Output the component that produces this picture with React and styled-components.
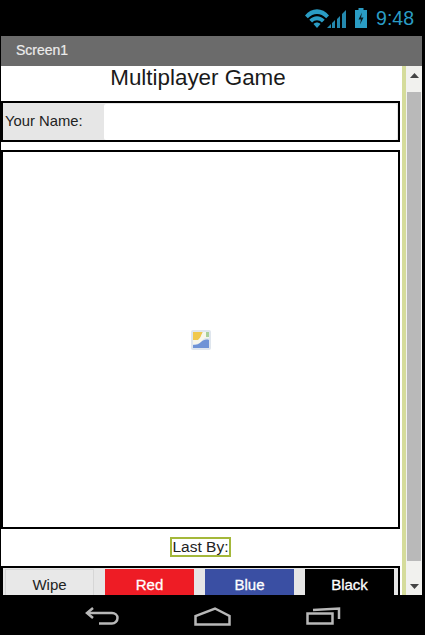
import React from 'react'
import styled, { createGlobalStyle } from 'styled-components'

const GlobalStyle = createGlobalStyle`
  html, body {
    margin: 0;
    padding: 0;
    background: #000;
    font-family: "Liberation Sans", Arial, sans-serif;
  }
`

const App = () => (
  <Phone>
    <GlobalStyle />
    <StatusBar>
      <WifiIcon />
      <SignalIcon />
      <BatteryIcon />
      <Clock>9:48</Clock>
    </StatusBar>
    <TitleBar>Screen1</TitleBar>
    <Body>
      <Content>
        <Title>Multiplayer Game</Title>
        <NameRow>
          <NameLabel>Your Name:</NameLabel>
          <NameInput />
        </NameRow>
        <Canvas>
          <BrokenImage />
        </Canvas>
        <LastRow>
          <LastBy>Last By:</LastBy>
        </LastRow>
        <ButtonRow>
          <ColorButton $bg="#e8e8e8" $fg="#222" $edge="#d6d6d6">Wipe</ColorButton>
          <ColorButton $bg="#ee1c25" $fg="#fff" $bold>Red</ColorButton>
          <ColorButton $bg="#3a4fa3" $fg="#fff" $bold>Blue</ColorButton>
          <ColorButton $bg="#000" $fg="#fff" $bold>Black</ColorButton>
        </ButtonRow>
      </Content>
      <Scrollbar>
        <Arrow viewBox="0 0 9 5"><path d="M4.5 0 9 5H0z" /></Arrow>
        <Thumb />
        <BottomArrow viewBox="0 0 9 5"><path d="M0 0h9L4.5 5z" /></BottomArrow>
      </Scrollbar>
    </Body>
    <NavBar>
      <BackIcon />
      <HomeIcon />
      <RecentIcon />
    </NavBar>
  </Phone>
)

export default App

const WifiIcon = () => (
  <StatusSvg width="24" height="19" viewBox="0 0 24 19" fill="#2a9cc4">
    <path d="M0 6.500C6.500-1.800 17.500-1.800 24 6.500l-2.800 2.800C15.800 3.600 8.200 3.600 2.800 9.300z" />
    <path d="M4.300 10.800c4.400-4.800 11-4.800 15.400 0l-2.800 2.700c-2.900-3-6.900-3-9.800 0z" />
    <path d="M8.500 15c2-2 5-2 7 0L12 19z" />
  </StatusSvg>
)

const SignalIcon = () => (
  <SignalSvg width="19" height="19" viewBox="0 0 19 19" fill="#2488ad">
    <path d="M0 19 4 15v4zM5 19v-5l3-3v8zM10 19V10l3-3v12zM15 19V5l4-4v18z" />
  </SignalSvg>
)

const BatteryIcon = () => (
  <BatterySvg width="12" height="20" viewBox="0 0 12 20">
    <path d="M3.500 0h5v2H12v18H0V2h3.500z" fill="#2a9cc4" />
    <path d="M7 4.500 3.500 11.500H6l-1 5 3.500-7H6z" fill="#0b1a20" />
  </BatterySvg>
)

const BackIcon = () => (
  <svg width="34" height="18" viewBox="0 0 34 18" fill="none" stroke="#b8b8b8" strokeWidth="2.500">
    <path d="M2 6h25c3 0 5.500 2 5.500 5s-2.500 5.500-5.500 5.500H14" />
    <path d="M8 1 2 6l6 5" />
  </svg>
)

const HomeIcon = () => (
  <svg width="37" height="19" viewBox="0 0 37 19" fill="none" stroke="#b8b8b8" strokeWidth="2.500">
    <path d="M1.500 17.500V9L21 1.500 35.500 9v8.500z" />
  </svg>
)

const RecentIcon = () => (
  <svg width="35" height="18" viewBox="0 0 35 18" fill="none" stroke="#b8b8b8" strokeWidth="2.500">
    <path d="M1.500 6.500h25v10h-25z" />
    <path d="M7 3 33 1.500V12" />
  </svg>
)

const BrokenImage = () => (
  <svg width="20" height="20" viewBox="0 0 20 20">
    <rect width="20" height="20" rx="2" fill="#dfe6ee" />
    <path d="M2 2h10C10 5 10 8 7 10H2z" fill="#f0c84e" />
    <path d="M12 2h6v6c-4-1-6 1-8 4-2 2-5 2-8 2v-4h5c3-2 3-5 5-8z" fill="#f7f6ea" />
    <path d="M15 2h3v5h-3z" fill="#a9cf9a" />
    <path d="M2 15c4 0 6-1 8-3 2-2 5-3 8-2v8H2z" fill="#6f93d6" />
  </svg>
)

const StatusSvg = styled.svg`
  flex: none;
`

const SignalSvg = styled(StatusSvg)`
  margin-left: -2px;
`

const BatterySvg = styled(StatusSvg)`
  margin-left: 9px;
`

const Phone = styled.div`
  width: 425px;
  height: 635px;
  display: flex;
  flex-direction: column;
  background: #000;
  overflow: hidden;
`

const StatusBar = styled.div`
  height: 36px;
  flex: none;
  display: flex;
  align-items: center;
  justify-content: flex-end;
  padding-right: 11px;
`

const Clock = styled.span`
  margin-left: 9px;
  font-size: 19.5px;
  color: #2a9cc4;
`

const TitleBar = styled.div`
  height: 30px;
  flex: none;
  margin: 0 3px 0 1px;
  box-sizing: border-box;
  padding: 6px 0 0 15px;
  background: #6b6b6b;
  color: #ececec;
  font-size: 14px;
  -webkit-text-stroke: 0.2px #ececec;
`

const Body = styled.div`
  height: 529px;
  flex: none;
  margin: 0 3px 0 1px;
  display: flex;
  background: #fff;
  overflow: hidden;
`

const Content = styled.div`
  width: 401px;
  flex: none;
  box-sizing: border-box;
  padding-right: 2px;
`

const Title = styled.div`
  height: 35px;
  box-sizing: border-box;
  padding-right: 5px;
  font-size: 22.4px;
  line-height: 23px;
  text-align: center;
  color: #1a1a1a;
`

const NameRow = styled.div`
  height: 41px;
  box-sizing: border-box;
  display: flex;
  border: 2px solid #000;
  background: #e6e6e6;
`

const NameLabel = styled.div`
  width: 101px;
  flex: none;
  box-sizing: border-box;
  padding-left: 2px;
  font-size: 14.8px;
  line-height: 36px;
  color: #222;
`

const NameInput = styled.div`
  flex: 1;
  margin: 1px 1px 0 0;
  background: #fff;
  border-radius: 2px;
`

const Canvas = styled.div`
  height: 379px;
  margin-top: 8px;
  box-sizing: border-box;
  display: flex;
  align-items: center;
  justify-content: center;
  border: 2px solid #000;
  background: #fff;
`

const LastRow = styled.div`
  height: 37px;
  box-sizing: border-box;
  padding-bottom: 2px;
  display: flex;
  align-items: center;
  justify-content: center;
`

const LastBy = styled.div`
  box-sizing: border-box;
  height: 20px;
  padding: 0 0.5px;
  border: 2px solid #a4b83a;
  font-size: 15.5px;
  line-height: 16px;
  color: #222;
`

const ButtonRow = styled.div`
  height: 40px;
  box-sizing: border-box;
  display: grid;
  grid-template-columns: repeat(4, 89px);
  column-gap: 11px;
  padding: 1px 4px 0 2px;
  border: 2px solid #000;
  background: #e6e6e6;
`

const ColorButton = styled.div`
  height: 31px;
  padding-top: 7px;
  box-sizing: border-box;
  background: ${(props) => props.$bg};
  color: ${(props) => props.$fg};
  font-size: 15px;
  text-align: center;
  ${(props) => props.$edge && `box-shadow: inset 0 0 0 1px ${props.$edge};`}
  ${(props) => props.$bold && '-webkit-text-stroke: 0.3px currentColor;'}
`

const Scrollbar = styled.div`
  width: 20px;
  flex: none;
  box-sizing: border-box;
  display: flex;
  flex-direction: column;
  align-items: center;
  padding: 7px 0 6px;
  background: #f1f1ee;
  border-left: 4px solid #d5dc9b;
`

const Arrow = styled.svg`
  width: 9px;
  height: 5px;
  flex: none;
  fill: #444;
`

const BottomArrow = styled(Arrow)`
  margin-top: auto;
`

const Thumb = styled.div`
  width: 14px;
  height: 469px;
  margin-top: 14px;
  flex: none;
  background: #b9b9b9;
`

const NavBar = styled.div`
  flex: 1;
  box-sizing: border-box;
  padding: 12px 0 0 85px;
  display: flex;
  align-items: flex-start;
  gap: 75px;
`
